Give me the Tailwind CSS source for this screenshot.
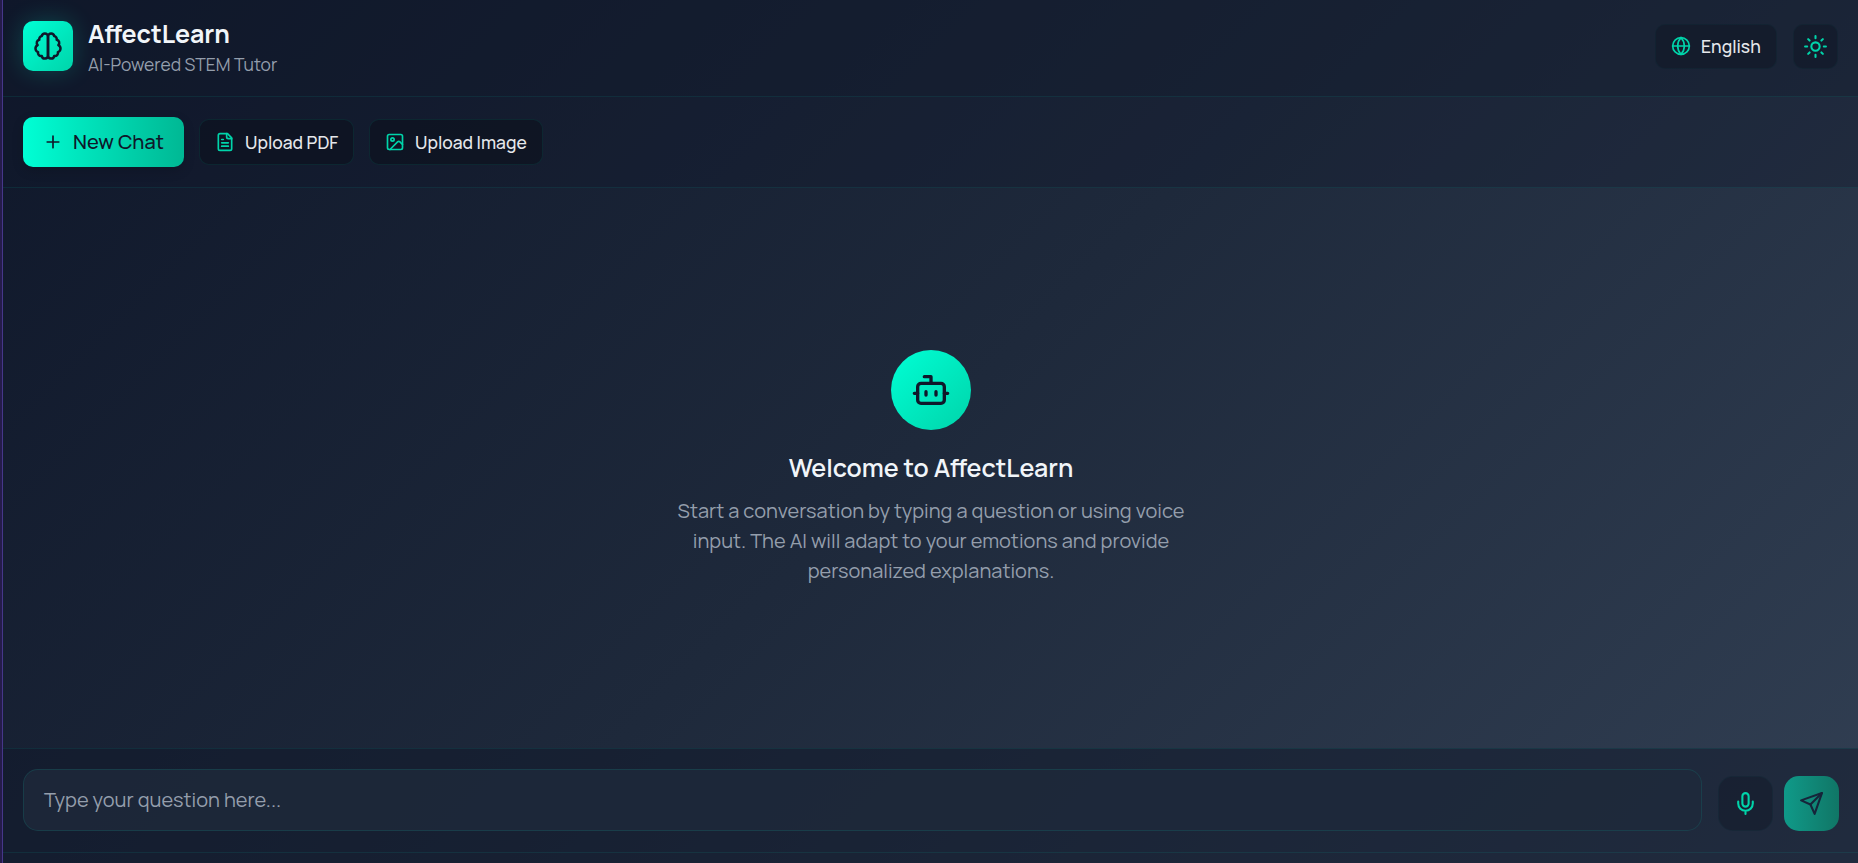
<!DOCTYPE html>
<html lang="en">
<head>
<meta charset="utf-8">
<title>AffectLearn</title>
<script src="https://cdn.jsdelivr.net/npm/@tailwindcss/browser@4"></script>
</head>
<body class="h-screen overflow-hidden bg-[#0f172a] font-['Manrope','Inter',sans-serif] text-slate-100">
<div class="flex h-full">
  <aside class="w-[3px] shrink-0 border-r border-[#46378a] bg-[#251c4a]"></aside>
  <div class="flex min-w-0 flex-1 flex-col bg-[linear-gradient(135deg,#0f172a_0%,#1e293b_50%,#334155_105%)]">
    <header class="flex h-[97px] shrink-0 items-center justify-between border-b border-[#00ffd5]/8 bg-[#0f172a]/50 pr-5 pl-5">
      <div class="flex items-center gap-[15px]">
        <div class="mb-1 flex size-[50px] items-center justify-center rounded-[10px] bg-linear-135 from-[#00ffd5] to-[#00d4aa] text-[#0f172a] shadow-[0_0_25px_rgba(0,255,213,0.2)]">
          <svg class="size-[30px]" viewBox="0 0 24 24" fill="none" stroke="currentColor" stroke-width="2" stroke-linecap="round" stroke-linejoin="round"><path d="M9.5 2A2.5 2.5 0 0 1 12 4.5v15a2.5 2.5 0 0 1-4.96.44 2.5 2.5 0 0 1-2.96-3.08 3 3 0 0 1-.34-5.58 2.5 2.5 0 0 1 1.32-4.24 2.5 2.5 0 0 1 1.98-3A2.5 2.5 0 0 1 9.5 2Z"/><path d="M14.5 2A2.5 2.5 0 0 0 12 4.5v15a2.5 2.5 0 0 0 4.96.44 2.5 2.5 0 0 0 2.96-3.08 3 3 0 0 0 .34-5.58 2.5 2.5 0 0 0-1.32-4.24 2.5 2.5 0 0 0-1.98-3A2.5 2.5 0 0 0 14.5 2Z"/></svg>
        </div>
        <div>
          <h1 class="-mt-px mb-px text-[25px] leading-[33px] font-bold">AffectLearn</h1>
          <p class="text-[17.5px] leading-[27px] text-[#949eac]">AI-Powered STEM Tutor</p>
        </div>
      </div>
      <div class="mb-1 flex items-center gap-4">
        <button class="flex h-[45px] w-[122px] items-center gap-[10px] rounded-[10px] border border-[#00ffd5]/3 bg-[#111827]/60 pl-[15px] text-[17.5px] font-medium text-gray-200">
          <svg class="size-[20px] text-[#00d4aa]" viewBox="0 0 24 24" fill="none" stroke="currentColor" stroke-width="2" stroke-linecap="round" stroke-linejoin="round"><circle cx="12" cy="12" r="10"/><path d="M12 2a14.5 14.5 0 0 0 0 20 14.5 14.5 0 0 0 0-20"/><path d="M2 12h20"/></svg>
          <span>English</span>
        </button>
        <button class="flex size-[45px] items-center justify-center rounded-[10px] border border-[#00ffd5]/3 bg-[#111827]/60 text-[#00d4aa]">
          <svg class="size-[25px]" viewBox="0 0 24 24" fill="none" stroke="currentColor" stroke-width="2" stroke-linecap="round" stroke-linejoin="round"><circle cx="12" cy="12" r="4"/><path d="M12 2v2M12 20v2M4.93 4.93l1.41 1.41M17.66 17.66l1.41 1.41M2 12h2M20 12h2M6.34 17.66l-1.41 1.41M19.07 4.93l-1.41 1.41"/></svg>
        </button>
      </div>
    </header>
    <nav class="flex h-[91px] shrink-0 items-center gap-[15px] border-b border-[#00ffd5]/8 bg-[#0f172a]/30 px-5">
      <button class="flex h-[50px] w-[161px] items-center gap-[10px] rounded-[10px] bg-linear-to-r from-[#00ffd5] to-[#00b894] pl-5 text-[20px] font-medium text-[#0f172a] shadow-[0_4px_12px_rgba(0,0,0,0.15)]">
        <svg class="size-5" viewBox="0 0 24 24" fill="none" stroke="currentColor" stroke-width="2" stroke-linecap="round"><path d="M5 12h14M12 5v14"/></svg>
        <span>New Chat</span>
      </button>
      <button class="flex h-[46px] w-[155px] items-center gap-[10px] rounded-[10px] border border-[#00ffd5]/8 bg-[#0c111d]/60 pl-[15px] text-[17.5px] font-medium text-gray-200">
        <svg class="size-5 text-[#00d4aa]" viewBox="0 0 24 24" fill="none" stroke="currentColor" stroke-width="2" stroke-linecap="round" stroke-linejoin="round"><path d="M15 2H6a2 2 0 0 0-2 2v16a2 2 0 0 0 2 2h12a2 2 0 0 0 2-2V7Z"/><path d="M14 2v4a2 2 0 0 0 2 2h4M10 9H8M16 13H8M16 17H8"/></svg>
        <span>Upload PDF</span>
      </button>
      <button class="flex h-[46px] w-[174px] items-center gap-[10px] rounded-[10px] border border-[#00ffd5]/8 bg-[#0c111d]/60 pl-[15px] text-[17.5px] font-medium text-gray-200">
        <svg class="size-5 text-[#00d4aa]" viewBox="0 0 24 24" fill="none" stroke="currentColor" stroke-width="2" stroke-linecap="round" stroke-linejoin="round"><rect width="18" height="18" x="3" y="3" rx="2"/><circle cx="9" cy="9" r="2"/><path d="m21 15-3.086-3.086a2 2 0 0 0-2.828 0L6 21"/></svg>
        <span>Upload Image</span>
      </button>
    </nav>
    <main class="flex flex-1 flex-col items-center pt-[162px] pl-px text-center">
      <div class="flex size-20 items-center justify-center rounded-full bg-linear-135 from-[#00ffd5] to-[#00d4aa] text-[#0f172a]">
        <svg class="size-10" viewBox="0 0 24 24" fill="none" stroke="currentColor" stroke-width="2" stroke-linecap="round" stroke-linejoin="round"><path d="M12 8V4H8"/><rect width="16" height="12" x="4" y="8" rx="2"/><path d="M2 14h2M20 14h2M15 13v2M9 13v2"/></svg>
      </div>
      <h2 class="mt-5 text-[25px] leading-[36px] font-semibold">Welcome to AffectLearn</h2>
      <p class="mt-[10px] text-[20px] leading-[30px] text-[#949eac]">Start a conversation by typing a question or using voice<br>input. The AI will adapt to your emotions and provide<br>personalized explanations.</p>
    </main>
    <footer class="h-[115px] shrink-0 border-t border-[#00ffd5]/8 bg-[#0f172a]/50">
      <div class="flex h-[104px] items-end border-b border-[#00ffd5]/8 pr-[19px] pb-[21px] pl-5">
        <div class="flex h-[62px] w-[1679px] items-center rounded-[15px] border border-[#00ffd5]/10 bg-[#1e293b]/80 px-5 text-[20px] text-[#949eac]">Type your question here...</div>
        <button class="ml-4 flex size-[55px] items-center justify-center rounded-[15px] border border-[#00ffd5]/3 bg-[#111827]/50 text-[#00d4aa]">
          <svg class="size-[25px]" viewBox="0 0 24 24" fill="none" stroke="currentColor" stroke-width="2" stroke-linecap="round" stroke-linejoin="round"><path d="M12 2a3 3 0 0 0-3 3v7a3 3 0 0 0 6 0V5a3 3 0 0 0-3-3Z"/><path d="M19 10v2a7 7 0 0 1-14 0v-2M12 19v3"/></svg>
        </button>
        <button class="ml-[11px] flex size-[55px] items-center justify-center rounded-[15px] bg-linear-to-r from-[#0f9a89] to-[#107666] text-[#16253a]">
          <svg class="size-[25px]" viewBox="0 0 24 24" fill="none" stroke="currentColor" stroke-width="2" stroke-linecap="round" stroke-linejoin="round"><path d="m22 2-7 20-4-9-9-4Z"/><path d="M22 2 11 13"/></svg>
        </button>
      </div>
    </footer>
  </div>
</div>
</body>
</html>
